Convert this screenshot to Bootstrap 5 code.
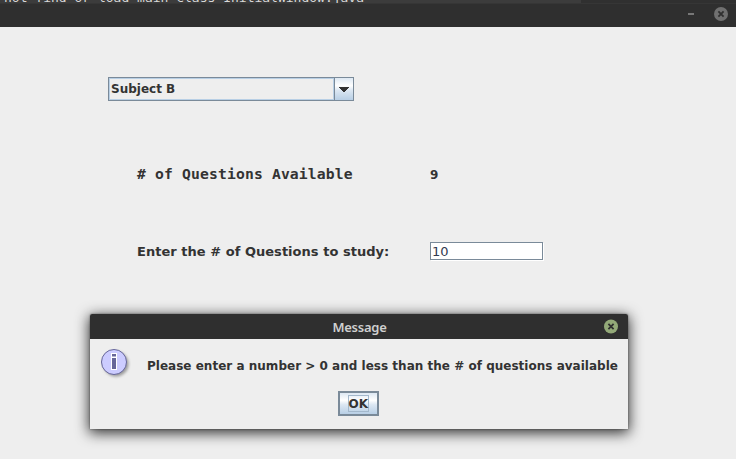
<!DOCTYPE html>
<html lang="en">
<head>
<meta charset="utf-8">
<title>Message</title>
<link href="https://cdn.jsdelivr.net/npm/bootstrap@5.3.0/dist/css/bootstrap.min.css" rel="stylesheet">
<style>
  body { width: 736px; height: 459px; background: #eee; color: #333; font: bold 12px/16px "DejaVu Sans", sans-serif; }
  .terminal { height: 3px; background: #3c3c3c; color: #d8d8d8; font: 13px/16px "DejaVu Sans Mono", monospace; }
  .terminal-text { width: 581px; padding-left: 4px; margin-top: -10px; height: 16px; }
  .terminal-side { background: #303030; }
  .titlebar { height: 24px; background: #2f2f2f; border-top: 1px solid #363636; padding-right: 8px; gap: 20px; }
  .minimize { width: 6px; height: 2px; background: #777; margin-bottom: 3px; }
  .close-main { margin-bottom: 3px; }
  .form-area { padding: 50px 0 0 108px; }
  .combo { width: 246px; height: 24px; border: 1px solid #7a8a99; }
  .combo-value { border: 1px solid #b8cfe5; padding-left: 1px; line-height: 20px; }
  .combo-arrow { width: 19px; border-left: 1px solid #7a8a99; }
  .metal { background: linear-gradient(#dde8f3 0, #fff 35%, #dde8f3 55%, #b8cfe5 100%); }
  .line { padding-left: 29px; }
  .available { margin-top: 63px; height: 20px; }
  .available-count { padding-top: 2px; }
  .caption-col { width: 293px; }
  .mono-caption { font: bold 14.7px/20px "DejaVu Sans Mono", monospace; letter-spacing: .15px; }
  .study { margin-top: 58px; height: 18px; font-size: 13px; }
  .study-caption { padding-top: 2px; letter-spacing: .03px; }
  .number { width: 113px; height: 18px; border: 1px solid #7a8a99; background: #fff; font-size: 13px; line-height: 18px; padding-left: 1px; box-shadow: 1px 1px 0 #fff; color: #333a50; font-weight: 400; }
  .dialog-window { left: 90px; top: 314px; width: 538px; height: 115px; background: #eee; border-radius: 2px 2px 0 0; box-shadow: 0 3px 14px 1px rgba(0,0,0,.8), 0 0 2px rgba(0,0,0,.5); }
  .dialog-title { height: 25px; background: #2f2f2f; border-radius: 2px 2px 0 0; color: #d0d0d0; font: 600 13px/25px "Noto Sans", sans-serif; letter-spacing: -.25px; padding-right: 9px; }
  .dialog-caption { padding-left: 26px; padding-top: 1px; }
  .message-row { padding-left: 9px; height: 52px; }
  .message-text { margin: 19px 0 0 16px; letter-spacing: .015px; }
  .ok-row { padding-right: 1px; }
  .ok { width: 41px; height: 25px; margin-right: 1px; border: 2px solid #7a8a99; border-radius: 0; padding: 0; font: bold 12px/17px "DejaVu Sans", sans-serif; color: #333; }
  .ok-focus { width: 21px; height: 17px; border: 1px solid #a3b8cc; }
</style>
</head>
<body class="overflow-hidden d-flex flex-column m-0">
  <div class="terminal d-flex overflow-hidden flex-shrink-0">
    <div class="terminal-text text-nowrap flex-shrink-0">not find or load main class InitialWindow.java</div>
    <div class="terminal-side flex-grow-1"></div>
  </div>
  <header class="titlebar d-flex align-items-center justify-content-end flex-shrink-0">
    <span class="minimize"></span>
    <svg class="close-main" width="14" height="14" viewBox="0 0 14 14"><circle cx="7" cy="7" r="7" fill="#707070"/><path d="M4.4 4.4l5.2 5.2M9.6 4.4L4.4 9.6" stroke="#303030" stroke-width="1.8"/></svg>
  </header>
  <main class="form-area flex-grow-1">
    <div class="combo d-flex">
      <div class="combo-value flex-grow-1">Subject B</div>
      <div class="combo-arrow metal d-flex align-items-center justify-content-center">
        <svg width="10" height="5" viewBox="0 0 10 5" shape-rendering="crispEdges"><path d="M0 0h10v1h-1v1h-1v1h-1v1h-1v1h-2v-1h-1v-1h-1v-1h-1v-1h-1z" fill="#333"/></svg>
      </div>
    </div>
    <div class="line available d-flex align-items-center">
      <div class="caption-col mono-caption text-nowrap">#&nbsp;of Questions Available</div><div class="available-count">9</div>
    </div>
    <div class="line study d-flex align-items-center">
      <div class="caption-col study-caption text-nowrap">Enter the # of Questions to study:</div><div class="number">10</div>
    </div>
  </main>
  <section class="dialog-window position-absolute">
    <div class="dialog-title d-flex align-items-center">
      <div class="dialog-caption flex-grow-1 text-center">Message</div>
      <svg width="16" height="16" viewBox="0 0 16 16"><circle cx="8" cy="7.5" r="7" fill="#93a978"/><path d="M5.4 4.9l5.2 5.2M10.6 4.9l-5.2 5.2" stroke="#2f2f2f" stroke-width="1.8"/></svg>
    </div>
    <div class="message-row d-flex">
      <svg class="flex-shrink-0" width="32" height="42" viewBox="0 0 32 42">
        <defs><filter id="soft" x="-30%" y="-30%" width="160%" height="160%"><feGaussianBlur stdDeviation="1.5"/></filter></defs>
        <circle cx="17" cy="25" r="12.5" fill="#999" filter="url(#soft)"/>
        <circle cx="15" cy="23" r="12.5" fill="#ccf" stroke="#669"/>
        <path d="M12 14h6v17h-6z" fill="#fff"/>
        <path d="M13 15h4v2.5h-4zM13 19h4v11h-4z" fill="#669"/>
      </svg>
      <div class="message-text text-nowrap">Please enter a number &gt; 0 and less than the # of questions available</div>
    </div>
    <div class="ok-row d-flex justify-content-center">
      <button class="ok metal d-flex align-items-center justify-content-center"><span class="ok-focus">OK</span></button>
    </div>
  </section>
<script src="https://cdn.jsdelivr.net/npm/bootstrap@5.3.0/dist/js/bootstrap.bundle.min.js"></script>
</body>
</html>
